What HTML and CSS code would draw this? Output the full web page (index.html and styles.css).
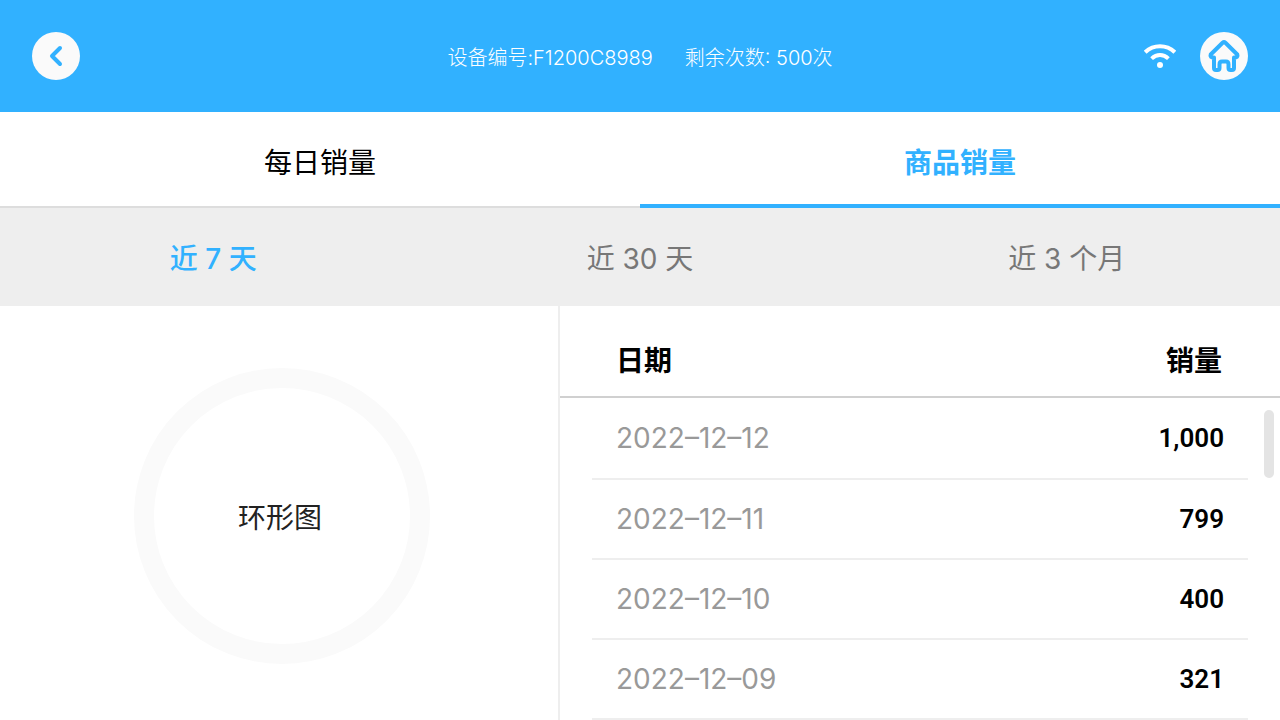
FILE: index.html
```html
<!DOCTYPE html>
<html lang="zh-CN">
<head>
<meta charset="utf-8">
<meta name="viewport" content="width=device-width, initial-scale=1">
<title>商品销量</title>
<link rel="stylesheet" href="styles.css">
</head>
<body>
<header class="topbar">
  <button class="round-button" type="button" aria-label="返回">
    <svg viewBox="0 0 48 48" fill="none" stroke="currentColor" stroke-width="4" stroke-linecap="round" stroke-linejoin="round"><path d="M28 16l-8 8 8 8"/></svg>
  </button>
  <div class="device-info">
    <span>设备编号:F1200C8989</span>
    <span>剩余次数: 500次</span>
  </div>
  <div class="topbar-actions">
    <svg class="wifi" viewBox="0 0 32 26" role="img" aria-label="无线网络">
      <g fill="none" stroke="#fff" stroke-width="4"><path d="M1.200 9.200Q7.500 3.200 16 3.200T30.800 9.200"/><path d="M7.600 15.600Q11.500 12 16 12T24.400 15.600"/></g>
      <circle cx="16" cy="22" r="3" fill="#fff"/>
    </svg>
    <button class="round-button" type="button" aria-label="首页">
      <svg viewBox="0 0 48 48" fill="none" stroke="currentColor" stroke-width="4" stroke-linejoin="round"><path d="M22.600 10.800Q24 9.500 25.400 10.800L37.300 22.500Q38.600 25.600 34 25.600V36Q34 38 32 38H30.500Q28.500 38 28.500 36V32.500Q28.500 29.500 26 29.500H22Q19.500 29.500 19.500 32.500V36Q19.500 38 17.500 38H16Q14 38 14 36V25.600Q9.400 25.600 10.700 22.500Z"/></svg>
    </button>
  </div>
</header>
<nav class="tabs">
  <button class="tab" type="button">每日销量</button>
  <button class="tab tab-active" type="button">商品销量</button>
</nav>
<nav class="periods">
  <button class="period period-active" type="button">近 7 天</button>
  <button class="period" type="button">近 30 天</button>
  <button class="period" type="button">近 3 个月</button>
</nav>
<main class="content">
  <section class="chart-panel">
    <div class="ring">环形图</div>
  </section>
  <section class="table-panel">
    <table class="sales">
      <thead><tr><th scope="col">日期</th><th scope="col">销量</th></tr></thead>
      <tbody>
        <tr><td>2022–12–12</td><td>1,000</td></tr>
        <tr><td>2022–12–11</td><td>799</td></tr>
        <tr><td>2022–12–10</td><td>400</td></tr>
        <tr><td>2022–12–09</td><td>321</td></tr>
      </tbody>
    </table>
    <div class="scroll-thumb"></div>
  </section>
</main>
</body>
</html>
```
FILE: styles.css
```css
* { box-sizing: border-box; }

body {
  margin: 0;
  min-height: 100vh;
  display: flex;
  flex-direction: column;
  background: #fff;
  color: #000;
  font-family: Inter, "Noto Sans CJK SC", sans-serif;
  font-size: 28px;
  line-height: 40px;
}

button {
  margin: 0;
  padding: 0;
  border: 0;
  background: none;
  color: inherit;
  font: inherit;
  cursor: pointer;
}

svg { display: block; }

.topbar {
  display: grid;
  grid-template-columns: 1fr auto 1fr;
  align-items: center;
  padding: 32px;
  background: #31b1ff;
  color: #fff;
}

.round-button {
  width: 48px;
  height: 48px;
  border-radius: 50%;
  background: #fafafa;
  color: #31b1ff;
}

.device-info {
  display: flex;
  gap: 32px;
  padding-top: 4px;
  font-size: 20px;
  font-weight: 300;
  line-height: 28px;
}

.topbar-actions {
  display: flex;
  justify-content: flex-end;
  align-items: center;
  gap: 24px;
}

.wifi { width: 32px; height: 26px; }

.tabs {
  display: grid;
  grid-template-columns: 1fr 1fr;
}

.tab {
  height: 96px;
  padding-top: 8px;
  border-bottom: 2px solid #ddd;
}

.tab-active {
  border-bottom: 4px solid #31b1ff;
  padding-top: 10px;
  color: #31b1ff;
  font-weight: 600;
}

.periods {
  display: grid;
  grid-template-columns: repeat(3, 1fr);
  background: #eee;
}

.period {
  height: 98px;
  padding-top: 4px;
  color: #777;
  font-weight: 400;
}

.period-active {
  color: #31b1ff;
  font-weight: 500;
}

.content {
  flex: 1;
  display: grid;
  grid-template-columns: 7fr 9fr;
}

.chart-panel {
  display: flex;
  align-items: flex-start;
  justify-content: center;
  padding: 62px 0 56px 6px;
  border-right: 2px solid #eee;
}

.ring {
  width: 296px;
  height: 296px;
  display: flex;
  align-items: center;
  justify-content: center;
  padding: 4px 4px 0 0;
  border: 20px solid #fafafa;
  border-radius: 50%;
  color: #222;
}

.table-panel { position: relative; }

.sales {
  width: 100%;
  border-collapse: separate;
  border-spacing: 0;
}

.sales th {
  height: 92px;
  padding: 20px 58px 0 56px;
  border-bottom: 2px solid #d0d0d0;
  font-weight: 600;
  text-align: left;
}

.sales td {
  height: 80px;
  padding: 0 56px 2px;
  color: #999;
  font-weight: 400;
}

.sales tbody tr {
  background: linear-gradient(#eee, #eee) center bottom / calc(100% - 64px) 2px no-repeat;
}

.sales tbody tr:first-child td { height: 82px; }

.sales th:last-child,
.sales td:last-child { text-align: right; }

.sales td:last-child {
  color: #000;
  font-family: Roboto, sans-serif;
  font-size: 26px;
  font-weight: 600;
}

.scroll-thumb {
  position: absolute;
  top: 104px;
  right: 6px;
  width: 10px;
  height: 68px;
  border-radius: 5px;
  background: #e4e4e4;
}
```
